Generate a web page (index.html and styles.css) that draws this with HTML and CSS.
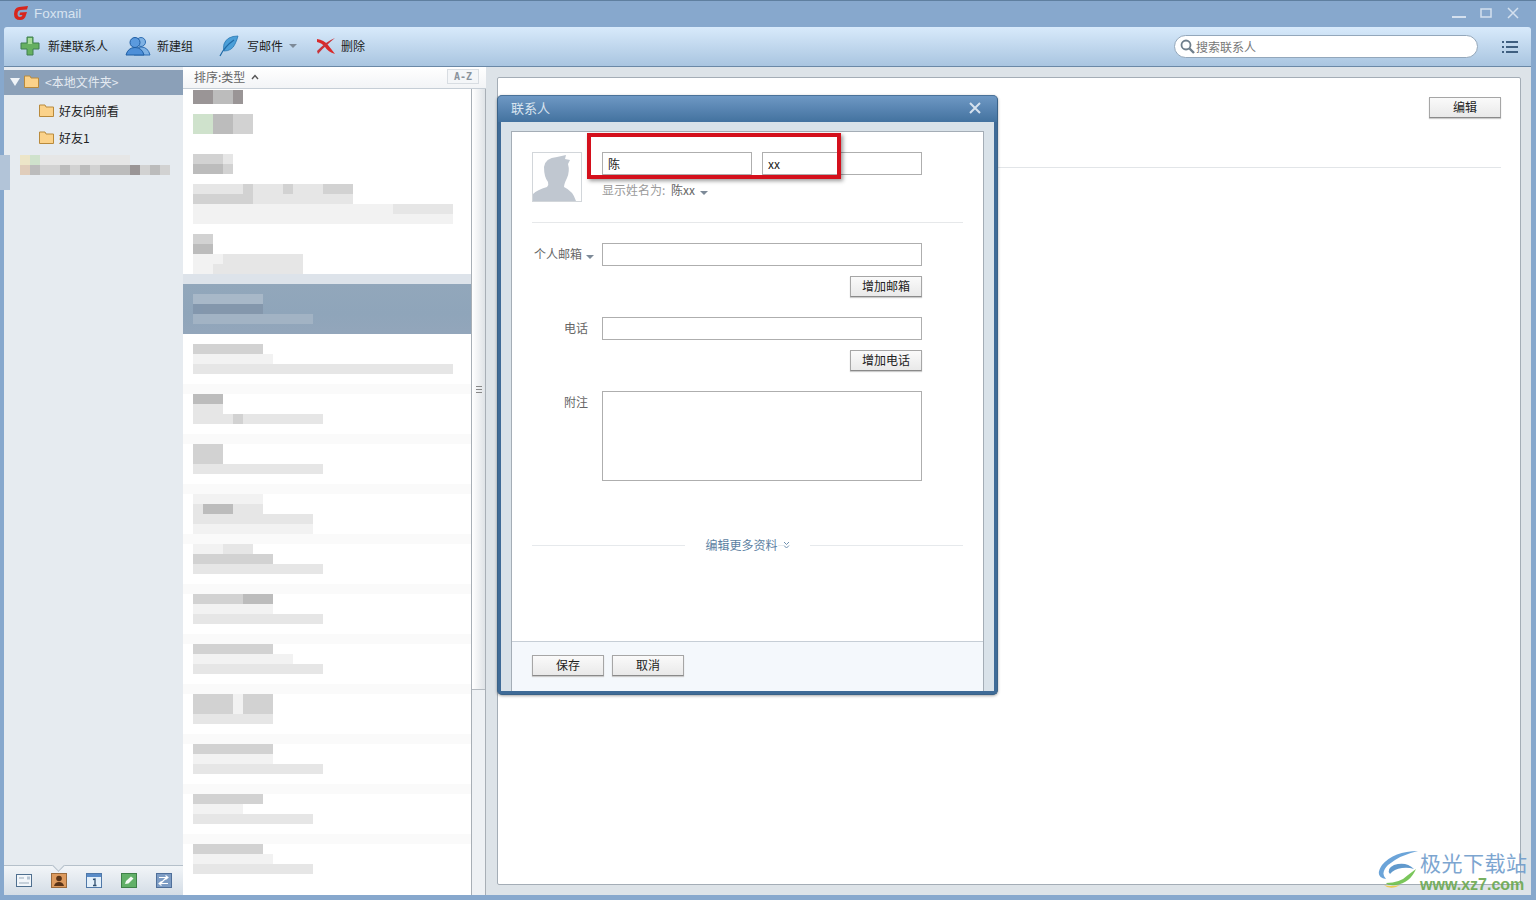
FILE: index.html
```html
<!DOCTYPE html>
<html lang="zh-CN">

<head>
  <meta charset="utf-8">
  <title>Foxmail</title>
  <link rel="stylesheet" href="styles.css">
</head>

<body>
  <div class="app">

    <div class="titlebar">
      <svg class="logo" width="16" height="16" viewBox="0 0 16 16">
        <path d="M15 1 L6 2 Q1 3 1 9 Q1 15 7 15 Q12 15 13 10 L14 7 L7 7.500 L6.500 10 L9.500 10 Q9 12 7 12 Q4.500 12 4.500 9 Q4.500 5.500 7.500 5 L14 4.500 Z" fill="#d8261c"/>
      </svg>
      <span class="app-name">Foxmail</span>
      <div class="win-btns">
        <svg width="14" height="14" viewBox="0 0 14 14"><rect x="0" y="10" width="14" height="2" fill="#d4e0ee"/></svg>
        <svg width="14" height="14" viewBox="0 0 14 14"><rect x="2" y="3" width="10" height="8" fill="none" stroke="#d4e0ee" stroke-width="1.500"/></svg>
        <svg width="14" height="14" viewBox="0 0 14 14"><path d="M2 2 L12 12 M12 2 L2 12" stroke="#d4e0ee" stroke-width="1.500"/></svg>
      </div>
    </div>

    <div class="toolbar">
      <div class="tool tool-new">
        <svg width="20" height="20" viewBox="0 0 20 20">
          <path d="M7 1 H13 V7 H19 V13 H13 V19 H7 V13 H1 V7 H7 Z" fill="#66b060" stroke="#3f7f50"/>
          <path d="M8 2 H12 V8 H8 Z" fill="#a6dc98"/>
        </svg>
        <span>新建联系人</span>
      </div>
      <div class="tool tool-group">
        <svg width="26" height="20" viewBox="0 0 26 20">
          <circle cx="16" cy="6" r="4.500" fill="#7fb2e4" stroke="#2f6fb4"/>
          <path d="M9 19 Q10 11 16 11 Q23 11 25 19 Z" fill="#7fb2e4" stroke="#2f6fb4"/>
          <circle cx="10" cy="6.500" r="5" fill="#5b9ade" stroke="#1f5ea4"/>
          <path d="M1 19 Q3 11.500 10 11.500 Q17 11.500 19 19 Z" fill="#4d8fd8" stroke="#1f5ea4"/>
        </svg>
        <span>新建组</span>
      </div>
      <div class="tool tool-write">
        <svg width="20" height="22" viewBox="0 0 20 22">
          <path d="M19 1 Q8 1 5 9 Q4 13 5 16 Q13 16 16 9 Q18 5 19 1 Z" fill="#4b9fd8" stroke="#2a78b4" stroke-width="0.800"/>
          <path d="M1 21 Q6 11 15 5" fill="none" stroke="#1f6aa6" stroke-width="1.200"/>
        </svg>
        <span>写邮件</span>
        <i class="caret"></i>
      </div>
      <div class="tool tool-del">
        <svg width="20" height="18" viewBox="0 0 20 18">
          <path d="M1 2 Q8 3 12 8 Q16 13 19 17 Q12 15 9 10 Q6 6 1 5 Z" fill="#d92a2a"/>
          <path d="M19 1 Q14 5 11 8 Q6 12 2 17 L1 14 Q6 9 10 6 Q14 3 19 1 Z" fill="#c8343a"/>
        </svg>
        <span>删除</span>
      </div>
      <div class="search">
        <svg width="15" height="15" viewBox="0 0 15 15">
          <circle cx="6" cy="6" r="4.500" fill="none" stroke="#6f7f8c" stroke-width="1.800"/>
          <path d="M9.500 9.500 L14 14" stroke="#6f7f8c" stroke-width="2.400"/>
        </svg>
        <span>搜索联系人</span>
      </div>
      <svg class="menu-icon" width="16" height="12" viewBox="0 0 16 12">
        <path d="M0 0 H2 V2 H0 Z M4 0 H16 V2 H4 Z M0 5 H2 V7 H0 Z M4 5 H16 V7 H4 Z M0 10 H2 V12 H0 Z M4 10 H16 V12 H4 Z" fill="#3f5f80"/>
      </svg>
    </div>

    <div class="main">
      <aside class="sidebar">
        <div class="tree">
          <div class="tree-root">
            <i class="tri"></i>
            <svg class="folder" width="15" height="13" viewBox="0 0 15 13"><path d="M0.500 1 H6 L7 3 H14.500 V12.500 H0.500 Z" fill="#fbd28a" stroke="#b98a3c"/></svg>
            <span>&lt;本地文件夹&gt;</span>
          </div>
          <div class="tree-item">
            <svg class="folder" width="15" height="13" viewBox="0 0 15 13"><path d="M0.500 1 H6 L7 3 H14.500 V12.500 H0.500 Z" fill="#fbd28a" stroke="#b98a3c"/></svg>
            <span>好友向前看</span>
          </div>
          <div class="tree-item">
            <svg class="folder" width="15" height="13" viewBox="0 0 15 13"><path d="M0.500 1 H6 L7 3 H14.500 V12.500 H0.500 Z" fill="#fbd28a" stroke="#b98a3c"/></svg>
            <span>好友1</span>
          </div>
          <div class="tree-acct">
            <div class="ln"><b class="w1 y"></b><b class="w1 g"></b><b class="w9 p1"></b></div>
            <div class="ln"><b class="w1 o"></b><b class="w1 p3"></b><b class="w2 p2"></b><b class="w1 p3"></b><b class="w1 p2"></b><b class="w1 p3"></b><b class="w1 p2"></b><b class="w3 p3"></b><b class="w1 p4"></b><b class="w1 p2"></b><b class="w1 p3"></b><b class="w1 p2"></b></div>
          </div>
        </div>
        <div class="tabs">
          <svg width="16" height="13" viewBox="0 0 16 13"><rect x="0.500" y="0.500" width="15" height="12" fill="#f2f6fa" stroke="#4f6f8f"/><path d="M3 4 H8 M3 9 H13" stroke="#9aabbb"/><rect x="11" y="2.500" width="3" height="3" fill="#b6c4d2"/></svg>
          <svg width="16" height="15" viewBox="0 0 16 15"><rect x="0.500" y="0.500" width="15" height="14" fill="#dd9a5e" stroke="#9a6a3c"/><circle cx="8" cy="5.500" r="2.800" fill="#5a3418"/><path d="M3 13 Q4 9 8 9 Q12 9 13 13 Z" fill="#5a3418"/></svg>
          <svg width="16" height="15" viewBox="0 0 16 15"><rect x="0.500" y="0.500" width="15" height="14" fill="#e4f0fa" stroke="#4f78a8"/><rect x="1" y="1" width="14" height="3" fill="#5a8cc8"/><path d="M7 6.500 L9 6 V12.500 M7 12.500 H10.500" fill="none" stroke="#2f4f70" stroke-width="1.300"/></svg>
          <svg width="16" height="15" viewBox="0 0 16 15"><rect x="0.500" y="0.500" width="15" height="14" fill="#62b068" stroke="#3f8048"/><path d="M4 11 L5 8 L10 3.500 L12.500 5.500 L7.500 10.500 Z" fill="#f4faf4"/></svg>
          <svg width="16" height="15" viewBox="0 0 16 15"><rect x="0.500" y="0.500" width="15" height="14" fill="#7d9cc4" stroke="#4f6f9a"/><path d="M3 4.500 H12 M9.500 2.500 L12 4.500 L9.500 6.500 M12 10.500 H3 M5.500 8.500 L3 10.500 L5.500 12.500 M4 11 L11 4" fill="none" stroke="#fff" stroke-width="1.100"/></svg>
        </div>
      </aside>

      <section class="list-col">
        <div class="list-head">
          <span class="sort">排序:类型</span>
          <svg width="8" height="6" viewBox="0 0 8 6"><path d="M1 5 L4 1.500 L7 5" fill="none" stroke="#555" stroke-width="1.400"/></svg>
          <span class="az">A-Z</span>
        </div>
        <div class="list-body">
          <div class="rows">
            <div class="row first">
              <div class="ln"><b class="w2 p4"></b><b class="w2 p3"></b><b class="w1 p4"></b></div>
              <div class="ln"></div>
              <div class="ln"><b class="w2 g"></b><b class="w2 p3"></b><b class="w2 p2"></b></div>
              <div class="ln"><b class="w2 g"></b><b class="w2 p3"></b><b class="w2 p2"></b></div>
            </div>
            <div class="row">
              <div class="ln"></div><div class="ln"></div>
              <div class="ln"><b class="w3 p2"></b><b class="w1 p1"></b></div>
              <div class="ln"><b class="w2 p3"></b><b class="w1 p3"></b><b class="w1 p2"></b></div>
            </div>
            <div class="row">
              <div class="ln"><b class="w5 p1"></b><b class="w1 p2"></b><b class="w3 p1"></b><b class="w1 p2"></b><b class="w3 p1"></b><b class="w3 p2"></b></div>
              <div class="ln"><b class="w6 p2"></b><b class="w10 p1"></b></div>
              <div class="ln"><b class="w20 p0"></b><b class="w6 p1"></b></div>
              <div class="ln"><b class="w26 p0"></b></div>
            </div>
            <div class="row">
              <div class="ln"><b class="w2 p2"></b></div>
              <div class="ln"><b class="w2 p3"></b></div>
              <div class="ln"><b class="w3 p0"></b><b class="w8 p1"></b></div>
              <div class="ln"><b class="w2 p0"></b><b class="w9 p1"></b></div>
            </div>
            <div class="row sel">
              <div class="ln"></div>
              <div class="ln"></div>
              <div class="ln"><b class="w7 sl"></b></div>
              <div class="ln"><b class="w1 sd"></b><b class="w6 sd2"></b></div>
              <div class="ln"><b class="w12 sl2"></b></div>
            </div>
            <div class="row">
              <div class="ln"><b class="w7 p2"></b></div>
              <div class="ln"><b class="w8 p0"></b></div>
              <div class="ln"><b class="w26 p1"></b></div>
            </div>
            <div class="row">
              <div class="ln"><b class="w3 p3"></b></div>
              <div class="ln"><b class="w3 p1"></b></div>
              <div class="ln"><b class="w4 p1"></b><b class="w1 p2"></b><b class="w8 p1"></b></div>
            </div>
            <div class="row">
              <div class="ln"><b class="w3 p2"></b></div>
              <div class="ln"><b class="w3 p2"></b></div>
              <div class="ln"><b class="w13 p1"></b></div>
            </div>
            <div class="row">
              <div class="ln"><b class="w7 p0"></b></div>
              <div class="ln"><b class="w1 p1"></b><b class="w3 p3"></b><b class="w3 p1"></b></div>
              <div class="ln"><b class="w12 p1"></b></div>
              <div class="ln"><b class="w12 p0"></b></div>
            </div>
            <div class="row">
              <div class="ln"><b class="w3 p0"></b><b class="w3 p1"></b></div>
              <div class="ln"><b class="w8 p2"></b></div>
              <div class="ln"><b class="w13 p1"></b></div>
            </div>
            <div class="row">
              <div class="ln"><b class="w5 p2"></b><b class="w3 p3"></b></div>
              <div class="ln"><b class="w8 p0"></b></div>
              <div class="ln"><b class="w13 p1"></b></div>
            </div>
            <div class="row">
              <div class="ln"><b class="w8 p2"></b></div>
              <div class="ln"><b class="w10 p0"></b></div>
              <div class="ln"><b class="w13 p1"></b></div>
            </div>
            <div class="row">
              <div class="ln"><b class="w4 p2"></b><b class="w1 p0"></b><b class="w3 p2"></b></div>
              <div class="ln"><b class="w4 p2"></b><b class="w1 p0"></b><b class="w3 p2"></b></div>
              <div class="ln"><b class="w8 p1"></b></div>
            </div>
            <div class="row">
              <div class="ln"><b class="w8 p2"></b></div>
              <div class="ln"><b class="w8 p0"></b></div>
              <div class="ln"><b class="w13 p1"></b></div>
            </div>
            <div class="row">
              <div class="ln"><b class="w7 p2"></b></div>
              <div class="ln"><b class="w5 p0"></b></div>
              <div class="ln"><b class="w12 p1"></b></div>
            </div>
            <div class="row">
              <div class="ln"><b class="w7 p2"></b></div>
              <div class="ln"><b class="w8 p0"></b></div>
              <div class="ln"><b class="w12 p1"></b></div>
            </div>
          </div>
          <div class="scrollbar">
            <div class="thumb"><i class="grip"></i></div>
          </div>
        </div>
      </section>

      <section class="pane">
        <div class="pane-top"><span class="btn">编辑</span></div>
        <div class="pane-rule"></div>
      </section>
    </div>
  </div>

  <div class="dialog">
    <div class="dlg-title">
      <span>联系人</span>
      <svg width="12" height="12" viewBox="0 0 12 12"><path d="M1 1 L11 11 M11 1 L1 11" stroke="#d6e2ee" stroke-width="2"/></svg>
    </div>
    <div class="dlg-frame">
      <div class="dlg-body">
        <div class="dlg-content">
          <div class="name-row">
            <div class="avatar">
              <svg width="48" height="48" viewBox="0 0 48 48">
                <path d="M0 48 V41 Q4 37 14 34 Q16 32 15 29 Q11 24 11 14 Q12 5 24 4 L33 2 L32 6 L37 7 L35 11 Q37 18 34 25 Q31 31 31 34 Q40 38 43 48 Z" fill="#c0c7d0"/>
              </svg>
            </div>
            <div class="name-fields">
              <div class="name-inputs">
                <div class="input name-input">陈</div>
                <div class="input name-input">xx</div>
              </div>
              <div class="display-name">显示姓名为: <em>陈xx</em><i class="caret"></i></div>
            </div>
          </div>
          <div class="rule"></div>
          <div class="form-row email">
            <span class="label">个人邮箱<i class="caret"></i></span>
            <div class="input"></div>
          </div>
          <div class="add-row"><span class="btn">增加邮箱</span></div>
          <div class="form-row phone">
            <span class="label">电话</span>
            <div class="input"></div>
          </div>
          <div class="add-row"><span class="btn">增加电话</span></div>
          <div class="form-row note">
            <span class="label">附注</span>
            <div class="input textarea"></div>
          </div>
          <div class="more">
            <span class="more-text">编辑更多资料</span>
            <svg width="7" height="8" viewBox="0 0 7 8"><path d="M1 1 L3.500 3.500 L6 1 M1 4.500 L3.500 7 L6 4.500" fill="none" stroke="#6f8fae"/></svg>
          </div>
        </div>
        <div class="dlg-foot">
          <span class="btn">保存</span>
          <span class="btn">取消</span>
        </div>
      </div>
    </div>
  </div>

  <div class="redbox"></div>

  <div class="watermark">
    <svg width="44" height="42" viewBox="0 0 44 42">
      <path d="M42 2 Q18 2 6 16 Q-2 28 10 30 Q4 24 12 16 Q24 6 42 2 Z" fill="#5b9bd5"/>
      <path d="M38 20 Q30 12 18 16 Q10 20 14 25 Q18 20 26 19 Q32 18 38 20 Z" fill="#4f8fc8"/>
      <path d="M40 20 Q34 34 20 36 Q12 37 10 34 Q24 34 32 26 Z" fill="#6cc04a"/>
      <path d="M20 38 Q12 40 8 36 Q14 38 24 36 Z" fill="#f0c840"/>
    </svg>
    <div class="wm-text">
      <span class="wm-cn">极光下载站</span>
      <span class="wm-url">www.xz7.com</span>
    </div>
  </div>
</body>

</html>
```

FILE: styles.css
```css
* {
  box-sizing: border-box;
}

body {
  margin: 0;
  width: 1536px;
  height: 900px;
  overflow: hidden;
  position: relative;
  font: 12px "Noto Sans CJK SC", "Liberation Sans", sans-serif;
  color: #333;
}

.app {
  height: 900px;
  display: flex;
  flex-direction: column;
  padding: 0 5px 5px 4px;
  background: #87a8cd;
  border-top: 1px solid #5f7f9f;
}

/* title bar */
.titlebar {
  height: 26px;
  flex: none;
  display: flex;
  align-items: center;
  padding: 0 0 2px 9px;
}

.app-name {
  margin-left: 5px;
  font: 13.500px "Liberation Sans", sans-serif;
  color: #d8e4f0;
}

.win-btns {
  margin-left: auto;
  margin-right: 11px;
  display: flex;
  gap: 13px;
}

/* toolbar */
.toolbar {
  height: 40px;
  flex: none;
  display: flex;
  align-items: center;
  padding: 0 0 2px 16px;
  border-radius: 3px 3px 0 0;
  border-bottom: 1px solid #6a88a6;
  background: linear-gradient(#d8eafb, #a9c5e0);
}

.tool {
  display: flex;
  align-items: center;
  color: #1c1c1c;
  font-size: 12px;
}

.tool-new span {
  margin-left: 8px;
}

.tool-group {
  margin-left: 17px;
}

.tool-group span {
  margin-left: 6px;
}

.tool-write {
  margin-left: 26px;
}

.tool-write span {
  margin-left: 8px;
}

.tool-write .caret {
  margin-left: 6px;
}

.tool-del {
  margin-left: 19px;
}

.tool-del span {
  margin-left: 5px;
}

.caret {
  display: inline-block;
  width: 0;
  height: 0;
  margin-left: 5px;
  border-left: 4px solid transparent;
  border-right: 4px solid transparent;
  border-top: 4px solid #7d8a98;
}

.search {
  margin: 2px 0 0 auto;
  width: 304px;
  height: 23px;
  display: flex;
  align-items: center;
  gap: 1px;
  padding-left: 5px;
  background: #fff;
  border: 1px solid #93a7bb;
  border-radius: 12px;
  color: #777;
}

.menu-icon {
  margin: 2px 13px 0 24px;
}

/* main area */
.main {
  flex: 1;
  min-height: 0;
  display: flex;
  background: #dde3e8;
}

.sidebar {
  width: 179px;
  flex: none;
  display: flex;
  flex-direction: column;
  background: #e6ebf0;
  padding-top: 3px;
}

.tree {
  flex: 1;
  position: relative;
}

.tree-root {
  height: 25px;
  display: flex;
  align-items: center;
  padding: 0 0 2px 6px;
  background: #8ba0b8;
  color: #e4eaf1;
}

.tree-root span {
  margin-left: 6px;
}

.tri {
  width: 0;
  height: 0;
  margin-right: 4px;
  border-left: 5px solid transparent;
  border-right: 5px solid transparent;
  border-top: 8px solid #f0f4f8;
}

.tree-item {
  height: 27px;
  display: flex;
  align-items: center;
  padding: 0 0 2px 35px;
  color: #222;
}

.tree-item span {
  margin-left: 5px;
}

.tree-root + .tree-item {
  margin-top: 3px;
}

.tree-acct {
  margin: 3px 0 0 -4px;
  padding: 0 0 15px 10px;
  border-left: 10px solid #b2c4d8;
}

.tabs {
  height: 30px;
  flex: none;
  display: flex;
  align-items: center;
  gap: 19px;
  padding-left: 12px;
  border-top: 1px solid #b5c0ca;
  background: linear-gradient(#f2f5f8, #d4dde6);
  position: relative;
}

/* little notch above the active tab */
.tabs::before {
  content: "";
  position: absolute;
  left: 50px;
  top: -5px;
  width: 8px;
  height: 8px;
  border-right: 1px solid #b5c0ca;
  border-bottom: 1px solid #b5c0ca;
  background: #e6ebf0;
  transform: rotate(45deg);
}

/* contact list */
.list-col {
  width: 303px;
  flex: none;
  display: flex;
  flex-direction: column;
  background: #fff;
  overflow: hidden;
}

.list-head {
  height: 22px;
  flex: none;
  display: flex;
  align-items: center;
  padding: 0 0 2px 8px;
  border-bottom: 1px solid #c6ced6;
  background: linear-gradient(#fff, #f2f4f6);
  color: #666;
}

.sort {
  margin-left: 3px;
  margin-right: 6px;
}

.az {
  margin-left: auto;
  margin-right: 7px;
  width: 32px;
  height: 15px;
  text-align: center;
  font: bold 10px/13px "DejaVu Sans Mono", monospace;
  color: #8a939c;
  border: 1px solid #d8dde2;
  background: #f4f6f8;
}

.list-body {
  flex: 1;
  min-height: 0;
  display: flex;
}

.rows {
  flex: 1;
  overflow: hidden;
}

.row {
  height: 50px;
  padding-left: 10px;
  overflow: hidden;
}

.row.first {
  height: 45px;
  padding-top: 1px;
}

.row.first .ln:first-child,
.row.first .ln:first-child b {
  height: 14px;
}

.row.sel {
  height: 60px;
  margin-top: -10px;
  position: relative;
  background: linear-gradient(#dde3ea 10px, #92a7bb 10px, #8fa5ba 40px, #93a6bb 60px);
}

.row.sel ~ .row {
  padding-top: 10px;
  background: linear-gradient(#fafafa 10px, transparent 10px);
}

.row.sel + .row {
  background: none;
}

.ln {
  height: 10px;
  display: flex;
}

.ln b {
  display: block;
  height: 10px;
}

.w1 { width: 10px; }
.w2 { width: 20px; }
.w3 { width: 30px; }
.w4 { width: 40px; }
.w5 { width: 50px; }
.w6 { width: 60px; }
.w7 { width: 70px; }
.w8 { width: 80px; }
.w9 { width: 90px; }
.w10 { width: 100px; }
.w12 { width: 120px; }
.w13 { width: 130px; }
.w20 { width: 200px; }
.w26 { width: 260px; }

.p0 { background: #f2f2f2; }
.p1 { background: #e6e6e6; }
.p2 { background: #d2d2d2; }
.p3 { background: #bcbcbc; }
.p4 { background: #9a9596; }
.g { background: #cfe2cc; }
.y { background: #ece5c8; }
.o { background: #e0cdbb; }
.sl { background: #a8b8c8; }
.sl2 { background: #a2b3c4; }
.sd { background: #8397ad; }
.sd2 { background: #8497ac; }

.scrollbar {
  width: 15px;
  flex: none;
  border-left: 1px solid #a8afb6;
  border-right: 1px solid #a8afb6;
  background: #eef1f4;
}

.thumb {
  height: 601px;
  display: flex;
  align-items: center;
  justify-content: center;
  border-bottom: 1px solid #b4bac0;
  background: linear-gradient(90deg, #fff, #dfe3e7);
}

.grip {
  width: 6px;
  height: 7px;
  border-top: 1px solid #888;
  border-bottom: 1px solid #888;
  background: linear-gradient(#888, #888) center / 100% 1px no-repeat;
}

/* right pane */
.pane {
  flex: 1;
  margin: 10px 10px 10px 11px;
  background: #fff;
  border: 1px solid #a4adb6;
  border-radius: 2px;
}

.pane-top {
  height: 89px;
  display: flex;
  justify-content: flex-end;
  align-items: flex-start;
  padding: 19px 19px 0 0;
}

.pane-rule {
  height: 1px;
  margin-right: 19px;
  background: #e2e5e8;
}

.btn {
  display: block;
  width: 72px;
  height: 21px;
  line-height: 18px;
  text-align: center;
  color: #222;
  background: linear-gradient(#fafafa, #e9e9e9);
  border: 1px solid #a6a6a6;
  border-bottom-color: #8a8a8a;
  box-shadow: 0 1px 1px #ccc;
}

/* contact dialog, floats over the window */
.dialog {
  position: absolute;
  left: 497px;
  top: 95px;
  width: 501px;
  height: 600px;
  display: flex;
  flex-direction: column;
  border: 1px solid #3a6288;
  border-top-color: #4a7299;
  border-radius: 5px;
  background: #3f6b97;
  box-shadow: 0 1px 3px rgba(0, 0, 0, 0.35);
}

.dlg-title {
  height: 26px;
  flex: none;
  display: flex;
  align-items: center;
  justify-content: space-between;
  padding: 0 16px 3px 13px;
  border-radius: 4px 4px 0 0;
  background: linear-gradient(#6e98c4, #43729f);
  color: #d8e4ef;
  font-size: 13px;
}

.dlg-frame {
  flex: 1;
  min-height: 0;
  margin: 0 3px 3px;
  padding: 9px 10px 0;
  background: #d9e2e9;
}

.dlg-body {
  height: 100%;
  display: flex;
  flex-direction: column;
  background: #fff;
  border: 1px solid #a4adb6;
  border-bottom: none;
}

.dlg-content {
  flex: 1;
  padding: 20px 20px 0;
}

.name-row {
  display: flex;
}

.avatar {
  width: 50px;
  height: 50px;
  border: 1px solid #d2d6da;
  overflow: hidden;
}

.name-fields {
  margin-left: 20px;
}

.name-inputs {
  display: flex;
  gap: 10px;
}

.input {
  height: 23px;
  background: #fff;
  border: 1px solid #aeaeae;
  padding-left: 5px;
  line-height: 21px;
  color: #222;
}

.name-input {
  width: 150px;
}

.name-input + .name-input {
  width: 160px;
}

.display-name {
  margin-top: 6px;
  height: 18px;
  line-height: 18px;
  color: #9a9a9a;
}

.display-name em {
  margin-left: 3px;
  font-style: normal;
  color: #666;
}

.rule {
  height: 1px;
  margin-top: 20px;
  background: #e6e8ea;
}

.form-row {
  display: flex;
  margin-top: 20px;
}

.form-row .input {
  width: 320px;
  margin-left: 14px;
}

.label {
  width: 56px;
  height: 23px;
  line-height: 21px;
  text-align: right;
  color: #666;
  white-space: nowrap;
}

.email .label {
  margin-left: 2px;
  width: 54px;
  text-align: left;
}

.email .caret {
  margin-left: 4px;
}

.input.textarea {
  height: 90px;
}

.add-row {
  display: flex;
  justify-content: flex-end;
  width: 390px;
  margin-top: 10px;
}

.more {
  margin-top: 54px;
  height: 20px;
  display: flex;
  align-items: center;
  justify-content: center;
  gap: 5px;
  color: #5c7fa2;
  background: linear-gradient(#e6e9ec, #e6e9ec) center / 100% 1px no-repeat;
}

.more-text {
  padding: 0 0 2px 20px;
  background: #fff;
}

.more svg {
  box-sizing: content-box;
  padding: 6px 20px 6px 0;
  background: #fff;
}

.dlg-foot {
  height: 50px;
  flex: none;
  display: flex;
  gap: 8px;
  padding: 13px 0 0 20px;
  border-top: 1px solid #c6ced6;
  background: #f4f8fc;
}

/* red annotation box over the name fields */
.redbox {
  position: absolute;
  left: 587px;
  top: 133px;
  width: 254px;
  height: 46px;
  border: 4px solid #d4101c;
  box-shadow: 2px 2px 4px rgba(0, 0, 0, 0.4);
}

/* site watermark */
.watermark {
  position: absolute;
  left: 1376px;
  top: 847px;
  display: flex;
  opacity: 0.9;
}

.watermark svg {
  margin-top: 2px;
}

.wm-text {
  display: flex;
  flex-direction: column;
}

.wm-cn {
  font-size: 21px;
  line-height: 30px;
  letter-spacing: 0.500px;
  color: #6f9ccc;
  white-space: nowrap;
}

.wm-url {
  font: bold 16px/16px "Liberation Sans", sans-serif;
  color: #6aa84f;
  white-space: nowrap;
}
```
